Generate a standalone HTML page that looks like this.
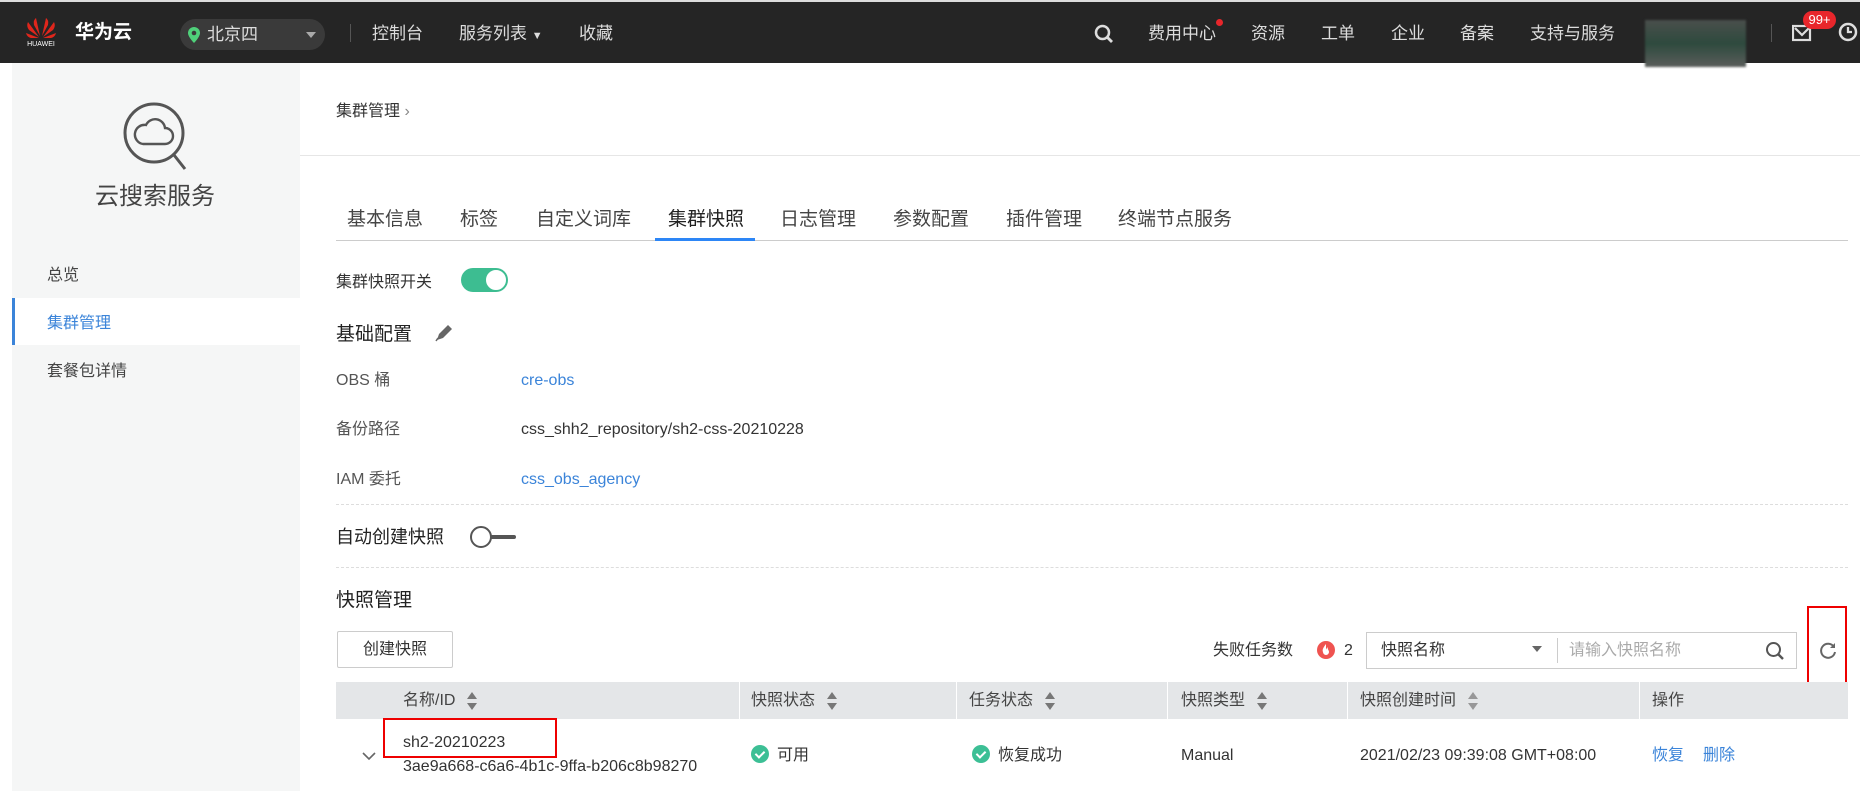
<!DOCTYPE html>
<html><head><meta charset="utf-8"><style>
*{margin:0;padding:0;box-sizing:border-box}
body{width:1860px;height:791px;overflow:hidden;background:#fff;font-family:"Liberation Sans","Noto Sans CJK SC",sans-serif;color:#333;font-size:16px;position:relative;line-height:22px}
.a{position:absolute;white-space:nowrap}
.top{position:absolute;left:0;top:0;width:1860px;height:63px;background:#252525;border-top:2px solid #ddd}
.tw{color:#ddd;font-size:17px;top:20px}
.side{position:absolute;left:12px;top:63px;width:288px;height:728px;background:#f5f6f6}
.blue{color:#3b84d9}
.dash{position:absolute;left:336px;width:1512px;border-top:1px dashed #ddd}
.th{top:682px;height:37px;background:#e4e6e8}
.sort{display:inline-block;vertical-align:middle;margin-left:12px;width:10px;height:18px;position:relative}
.sort:before{content:"";position:absolute;left:0;top:0;border:5px solid transparent;border-bottom:7px solid #777;border-top:0}
.sort:after{content:"";position:absolute;left:0;bottom:0;border:5px solid transparent;border-top:7px solid #777;border-bottom:0}
.ok{display:inline-block;width:18px;height:18px;border-radius:50%;background:#3cbf95;vertical-align:middle;margin-right:8px;position:relative;top:-2px}
.ok:after{content:"";position:absolute;left:6px;top:4px;width:4px;height:7px;border:solid #fff;border-width:0 2px 2px 0;transform:rotate(45deg)}
</style></head><body>
<div class="top"></div>
<svg class="a" style="left:24px;top:14px" width="34" height="34" viewBox="0 0 34 34">
<g fill="#e0261c"><path d="M16 22 L12 4 Q9 6 10 11Z"/><path d="M18 22 L22 4 Q25 6 24 11Z"/><path d="M15 23 L4 8 Q2 12 5 16Z"/><path d="M19 23 L30 8 Q32 12 29 16Z"/><path d="M15 24 L2 19 Q3 23 7 24Z"/><path d="M19 24 L32 19 Q31 23 27 24Z"/></g>
<text x="17" y="32" font-size="7" fill="#fff" text-anchor="middle" font-family="Liberation Sans">HUAWEI</text></svg>
<div class="a" style="left:75px;top:22px;color:#fff;font-size:19px;font-weight:bold">华为云</div>
<div class="a" style="left:180px;top:19px;width:145px;height:31px;border-radius:16px;background:#3a3a3a"></div>
<svg class="a" style="left:188px;top:27px" width="12" height="16" viewBox="0 0 12 16"><path d="M6 0a6 6 0 0 1 6 6c0 4-6 10-6 10S0 10 0 6a6 6 0 0 1 6-6z" fill="#4fd07a"/><circle cx="6" cy="6" r="2.3" fill="#3a3a3a"/></svg>
<div class="a tw" style="left:207px;top:24px;font-size:17px">北京四</div>
<div class="a" style="left:306px;top:32px;border:5px solid transparent;border-top:6px solid #aaa"></div>
<div class="a" style="left:350px;top:24px;width:1px;height:18px;background:#555"></div>
<div class="a tw" style="left:372px;top:23px">控制台</div>
<div class="a tw" style="left:459px;top:23px">服务列表 <span style="font-size:11px">▼</span></div>
<div class="a tw" style="left:579px;top:23px">收藏</div>
<svg class="a" style="left:1094px;top:24px" width="20" height="20" viewBox="0 0 20 20"><circle cx="8.5" cy="8.5" r="6.5" stroke="#ddd" stroke-width="2.5" fill="none"/><path d="M13 13l5 5" stroke="#ddd" stroke-width="2.8"/></svg>
<div class="a tw" style="left:1148px;top:23px">费用中心</div>
<div class="a" style="left:1216px;top:19px;width:7px;height:7px;border-radius:50%;background:#e8262b"></div>
<div class="a tw" style="left:1251px;top:23px">资源</div>
<div class="a tw" style="left:1321px;top:23px">工单</div>
<div class="a tw" style="left:1391px;top:23px">企业</div>
<div class="a tw" style="left:1460px;top:23px">备案</div>
<div class="a tw" style="left:1530px;top:23px">支持与服务</div>
<div class="a" style="left:1645px;top:20px;width:101px;height:47px;background:linear-gradient(180deg,#4a4f4c,#2e4a3e 50%,#5a5d5b);filter:blur(1px)"></div>
<div class="a" style="left:1771px;top:24px;width:1px;height:18px;background:#555"></div>
<svg class="a" style="left:1792px;top:24px" width="20" height="18" viewBox="0 0 20 18"><rect x="1" y="2" width="17" height="14" fill="none" stroke="#ddd" stroke-width="2.2"/><path d="M3 4l7 7 7-7" stroke="#ddd" stroke-width="2.2" fill="none"/></svg>
<div class="a" style="left:1803px;top:11px;width:33px;height:18px;border-radius:9px;background:#e8262b;color:#fff;font-size:13px;text-align:center;line-height:18px">99+</div>
<svg class="a" style="left:1838px;top:22px" width="20" height="20" viewBox="0 0 20 20"><circle cx="10" cy="10" r="8" stroke="#ddd" stroke-width="2.5" fill="none"/><path d="M10 5v5h4" stroke="#ddd" stroke-width="2.3" fill="none"/></svg>

<div class="side"></div>
<svg class="a" style="left:121px;top:100px" width="72" height="72" viewBox="0 0 72 72"><circle cx="33" cy="33" r="29" stroke="#555" stroke-width="3" fill="none"/><path d="M53 55l11 14" stroke="#555" stroke-width="3"/><path d="M22 44h22a8 8 0 0 0 0-16 10 10 0 0 0-19-3 9 9 0 0 0-3 19z" stroke="#555" stroke-width="2.4" fill="none"/></svg>
<div class="a" style="left:95px;top:182px;font-size:24px;color:#444;line-height:30px">云搜索服务</div>
<div class="a" style="left:47px;top:265px;color:#444">总览</div>
<div class="a" style="left:12px;top:298px;width:288px;height:47px;background:#fff;border-left:3px solid #3b84d9"></div>
<div class="a blue" style="left:47px;top:313px">集群管理</div>
<div class="a" style="left:47px;top:361px;color:#444">套餐包详情</div>

<div class="a" style="left:336px;top:101px;color:#333">集群管理 <span style="color:#888">›</span></div>
<div class="a" style="left:300px;top:155px;width:1560px;height:1px;background:#e6e6e6"></div>
<div class="a" style="left:336px;top:240px;width:1512px;height:1px;background:#ccc"></div>
<div class="a" style="left:655px;top:238px;width:100px;height:3px;background:#2d86f6"></div>
<div class="a" style="top:209px;left:347px;font-size:19px;color:#444">基本信息</div>
<div class="a" style="top:209px;left:460px;font-size:19px;color:#444">标签</div>
<div class="a" style="top:209px;left:536px;font-size:19px;color:#444">自定义词库</div>
<div class="a" style="top:209px;left:668px;font-size:19px;color:#222">集群快照</div>
<div class="a" style="top:209px;left:780px;font-size:19px;color:#444">日志管理</div>
<div class="a" style="top:209px;left:893px;font-size:19px;color:#444">参数配置</div>
<div class="a" style="top:209px;left:1006px;font-size:19px;color:#444">插件管理</div>
<div class="a" style="top:209px;left:1118px;font-size:19px;color:#444">终端节点服务</div>

<div class="a" style="left:336px;top:272px">集群快照开关</div>
<div class="a" style="left:461px;top:268px;width:47px;height:24px;border-radius:12px;background:#3dbd91"></div>
<div class="a" style="left:485px;top:269px;width:22px;height:22px;border-radius:50%;background:#fff;border:1px solid #3dbd91"></div>
<div class="a" style="left:336px;top:324px;font-size:19px;color:#222">基础配置</div>
<svg class="a" style="left:434px;top:323px" width="20" height="20" viewBox="0 0 20 20"><path d="M3 17l2-6 9-9 4 4-9 9z" fill="#666"/><path d="M2 18l2-3" stroke="#666" stroke-width="1.5"/></svg>
<div class="a" style="left:336px;top:370px;color:#555">OBS 桶</div>
<div class="a blue" style="left:521px;top:370px">cre-obs</div>
<div class="a" style="left:336px;top:419px;color:#555">备份路径</div>
<div class="a" style="left:521px;top:419px;color:#333">css_shh2_repository/sh2-css-20210228</div>
<div class="a" style="left:336px;top:469px;color:#555">IAM 委托</div>
<div class="a blue" style="left:521px;top:469px">css_obs_agency</div>
<div class="dash" style="top:504px"></div>
<div class="a" style="left:336px;top:526px;font-size:18px;color:#222">自动创建快照</div>
<div class="a" style="left:484px;top:535px;width:32px;height:4px;background:#555;border-radius:2px"></div>
<div class="a" style="left:470px;top:526px;width:22px;height:22px;border-radius:50%;background:#fff;border:2px solid #555"></div>
<div class="dash" style="top:567px"></div>
<div class="a" style="left:336px;top:590px;font-size:19px;color:#222">快照管理</div>

<div class="a" style="left:337px;top:631px;width:116px;height:37px;border:1px solid #ccc;border-radius:2px;text-align:center;line-height:35px;color:#333">创建快照</div>
<div class="a" style="left:1213px;top:640px;color:#333">失败任务数</div>
<svg class="a" style="left:1316px;top:640px" width="20" height="20" viewBox="0 0 20 20"><circle cx="10" cy="10" r="9" fill="#ef5350"/><path d="M10 4c-3 4-4 6-3 8a3 3 0 0 0 6 0c0-2-2-3-1-5-1 1-2 2-2 3" fill="#fff"/></svg>
<div class="a" style="left:1344px;top:640px">2</div>
<div class="a" style="left:1366px;top:632px;width:431px;height:37px;border:1px solid #ccc"></div>
<div class="a" style="left:1381px;top:640px;color:#333">快照名称</div>
<div class="a" style="left:1532px;top:646px;border:5px solid transparent;border-top:6px solid #666"></div>
<div class="a" style="left:1557px;top:638px;width:1px;height:25px;background:#ccc"></div>
<div class="a" style="left:1569px;top:640px;color:#aaa">请输入快照名称</div>
<svg class="a" style="left:1765px;top:641px" width="20" height="20" viewBox="0 0 20 20"><circle cx="8.5" cy="8.5" r="6.5" stroke="#555" stroke-width="2" fill="none"/><path d="M13 13l5 5" stroke="#555" stroke-width="2.4"/></svg>
<svg class="a" style="left:1818px;top:640px" width="20" height="20" viewBox="0 0 20 20"><path d="M16 7A7 7 0 1 0 17 12" stroke="#666" stroke-width="2" fill="none"/><path d="M17 3v5h-5z" fill="#666"/></svg>
<div class="a" style="left:1807px;top:606px;width:40px;height:80px;border:2px solid #e00"></div>

<div class="a th" style="left:336px;width:1512px"></div>
<div class="a" style="left:739px;top:682px;width:1px;height:37px;background:#fff"></div>
<div class="a" style="left:956px;top:682px;width:1px;height:37px;background:#fff"></div>
<div class="a" style="left:1167px;top:682px;width:1px;height:37px;background:#fff"></div>
<div class="a" style="left:1347px;top:682px;width:1px;height:37px;background:#fff"></div>
<div class="a" style="left:1639px;top:682px;width:1px;height:37px;background:#fff"></div>
<div class="a" style="left:403px;top:690px;color:#444">名称/ID<span class="sort"></span></div>
<div class="a" style="left:751px;top:690px;color:#444">快照状态<span class="sort"></span></div>
<div class="a" style="left:969px;top:690px;color:#444">任务状态<span class="sort"></span></div>
<div class="a" style="left:1181px;top:690px;color:#444">快照类型<span class="sort"></span></div>
<div class="a" style="left:1360px;top:690px;color:#444">快照创建时间<span class="sort" style="opacity:.7"></span></div>
<div class="a" style="left:1652px;top:690px;color:#444">操作</div>

<svg class="a" style="left:362px;top:751px" width="14" height="10" viewBox="0 0 14 10"><path d="M1 2l6 6 6-6" stroke="#666" stroke-width="1.6" fill="none"/></svg>
<div class="a" style="left:403px;top:732px;color:#333">sh2-20210223</div>
<div class="a" style="left:403px;top:756px;color:#333">3ae9a668-c6a6-4b1c-9ffa-b206c8b98270</div>
<div class="a" style="left:383px;top:718px;width:174px;height:40px;border:2px solid #e00"></div>
<div class="a" style="left:751px;top:745px;color:#333"><span class="ok"></span>可用</div>
<div class="a" style="left:972px;top:745px;color:#333"><span class="ok"></span>恢复成功</div>
<div class="a" style="left:1181px;top:745px;color:#333">Manual</div>
<div class="a" style="left:1360px;top:745px;color:#333">2021/02/23 09:39:08 GMT+08:00</div>
<div class="a blue" style="left:1652px;top:745px">恢复</div>
<div class="a blue" style="left:1703px;top:745px">删除</div>
</body></html>
